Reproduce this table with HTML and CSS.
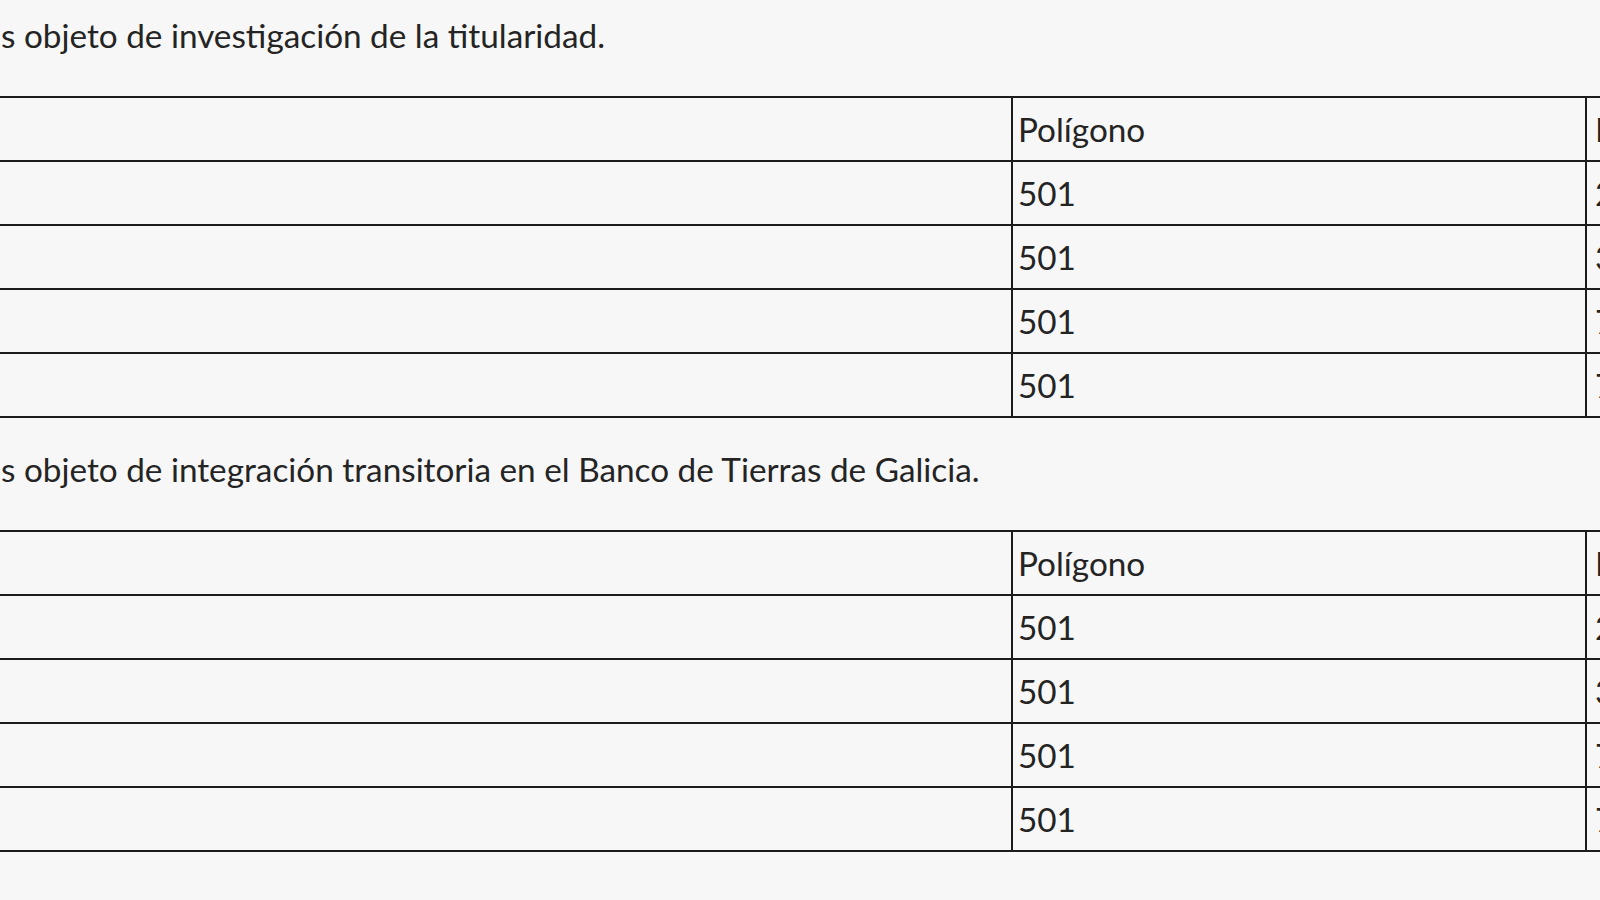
FILE: index.html
```html
<!DOCTYPE html>
<html lang="es">
<head>
<meta charset="utf-8">
<title>Parcelas</title>
<link rel="stylesheet" href="styles.css">
</head>
<body>
<div class="page">
  <p class="lead first">s objeto de investigación de la titularidad.</p>
  <table class="grid">
    <tr><td class="c1"></td><td class="c2">Polígono</td><td class="c3">Parcela</td></tr>
    <tr><td class="c1"></td><td class="c2">501</td><td class="c3">2</td></tr>
    <tr><td class="c1"></td><td class="c2">501</td><td class="c3">3</td></tr>
    <tr><td class="c1"></td><td class="c2">501</td><td class="c3">7</td></tr>
    <tr><td class="c1"></td><td class="c2">501</td><td class="c3">7</td></tr>
  </table>
  <p class="lead">s objeto de integración transitoria en el Banco de Tierras de Galicia.</p>
  <table class="grid">
    <tr><td class="c1"></td><td class="c2">Polígono</td><td class="c3">Parcela</td></tr>
    <tr><td class="c1"></td><td class="c2">501</td><td class="c3">2</td></tr>
    <tr><td class="c1"></td><td class="c2">501</td><td class="c3">3</td></tr>
    <tr><td class="c1"></td><td class="c2">501</td><td class="c3">7</td></tr>
    <tr><td class="c1"></td><td class="c2">501</td><td class="c3">7</td></tr>
  </table>
</div>
</body>
</html>
```
FILE: styles.css
```css
html, body {
  margin: 0;
  padding: 0;
  background: #f7f7f7;
  overflow: hidden;
}
body {
  width: 1600px;
  height: 900px;
  font-family: Lato, "Noto Sans", sans-serif;
  font-size: 33.3px;
  color: #242424;
}
.page {
  width: 1800px;
}
.lead {
  margin: 27px 0 37px 1px;
  line-height: 48px;
  height: 48px;
  white-space: nowrap;
}
.lead.first {
  margin-top: 11px;
}
.grid {
  border-collapse: collapse;
  table-layout: fixed;
  width: 1800px;
}
.grid td {
  box-sizing: border-box;
  height: 64px;
  padding: 0 6px;
  border-top: 2px solid #1c1c1c;
  border-bottom: 2px solid #1c1c1c;
  vertical-align: middle;
  line-height: 40px;
  white-space: nowrap;
  overflow: hidden;
}
.grid .c1 { width: 1012px; }
.grid .c2 { width: 574px; padding-left: 5px; border-left: 2px solid #1c1c1c; border-right: 2px solid #1c1c1c; }
.grid .c3 { width: 214px; padding-left: 8px; }
```
